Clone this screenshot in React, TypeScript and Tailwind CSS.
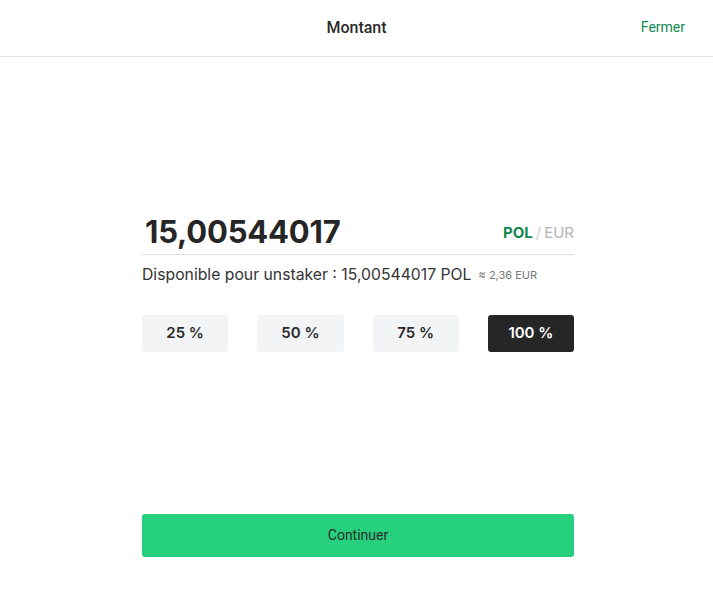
export default function App() {
  const presets = ["25 %", "50 %", "75 %", "100 %"];
  return (
    <div className="min-h-screen bg-white font-['Inter',sans-serif] text-[#2b2b2b]">
      <header className="relative flex h-[57px] items-center justify-center border-b border-[#e5e5e5]">
        <h1 className="font-['Roboto',sans-serif] text-[16px] font-medium text-[#2b2b2b]">Montant</h1>
        <button className="absolute right-[28px] top-[17px] font-['Roboto',sans-serif] text-[14px] text-[#118a52]">
          Fermer
        </button>
      </header>

      <main className="flex justify-center pl-[3px]">
        <div className="flex w-[432px] flex-col pt-[156px]">
          <div className="flex items-center justify-between border-b border-[#e0e0e0] pb-[3px] pl-[3px]">
            <span className="text-[31px] font-bold leading-[38px] tracking-[-0.2px] text-[#262626]">15,00544017</span>
            <div className="flex items-center gap-[3px] pt-[2px] text-[15px]">
              <span className="font-bold text-[#118a52]">POL</span>
              <span className="text-[#d0d0d0]">/</span>
              <span className="text-[#b5b5b5]">EUR</span>
            </div>
          </div>

          <div className="mt-[8px] flex items-center gap-[7px]">
            <span className="text-[15.75px] text-[#333333]">Disponible pour unstaker : 15,00544017 POL</span>
            <span className="text-[11px] text-[#777777]">≈ 2,36 EUR</span>
          </div>

          <div className="mt-[28px] grid grid-cols-4 gap-[29px]">
            {presets.map((p, i) => (
              <button
                key={p}
                className={
                  i === 3
                    ? "h-[37px] rounded-[3px] bg-[#262626] text-[15px] font-semibold text-white"
                    : "h-[37px] rounded-[3px] bg-[#f3f4f6] text-[15px] font-semibold text-[#2b2b2b]"
                }
              >
                {p}
              </button>
            ))}
          </div>

          <button className="mt-[162px] h-[43px] rounded-[3px] bg-[#26d07c] font-['Roboto',sans-serif] text-[14px] text-[#2b2b2b]">
            Continuer
          </button>
        </div>
      </main>
    </div>
  );
}
